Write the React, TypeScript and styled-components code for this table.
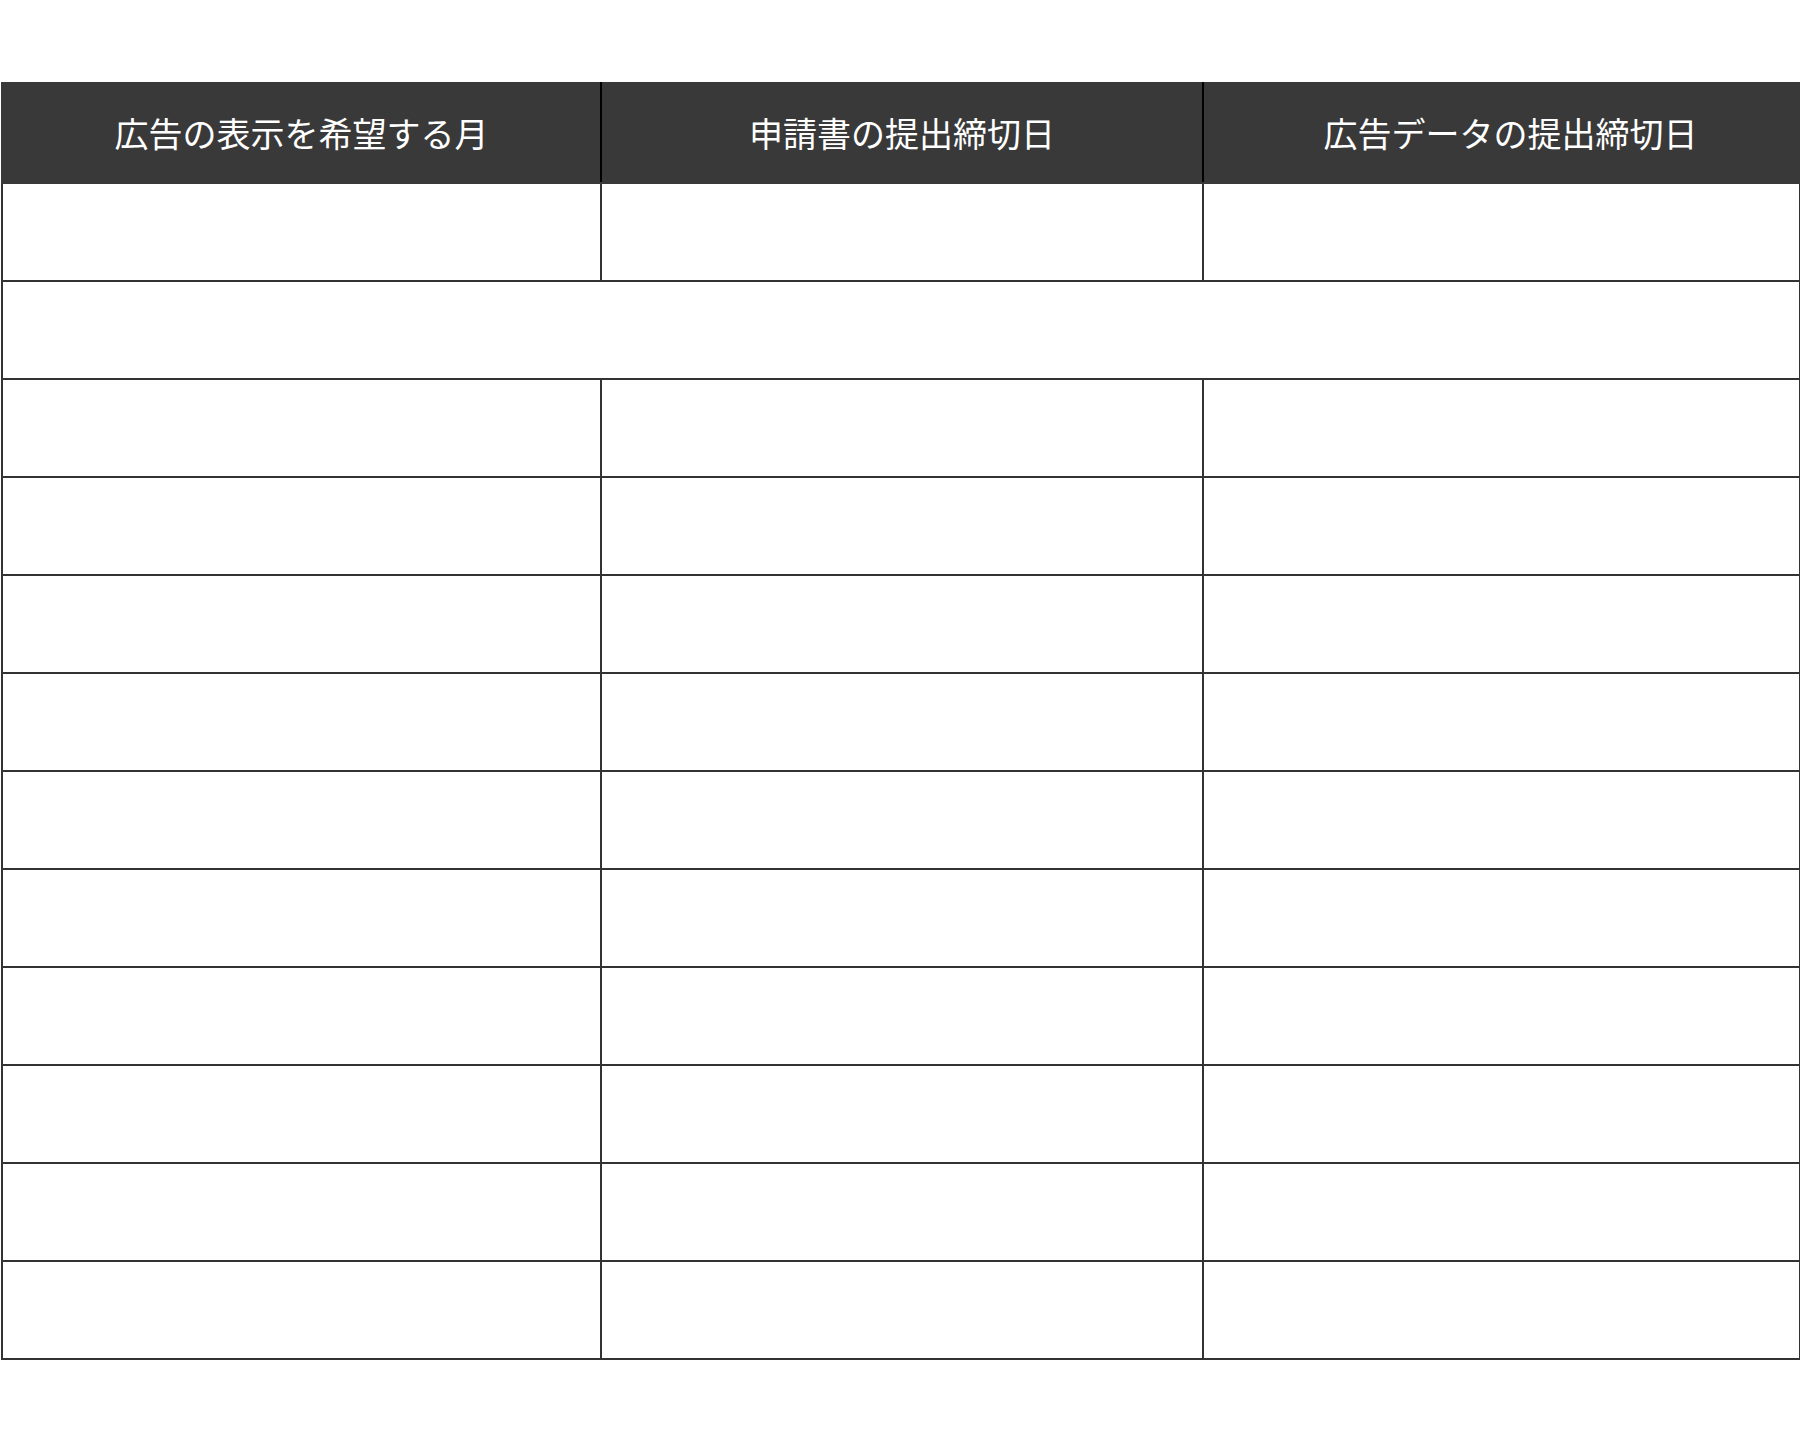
import React from "react";
import styled, { createGlobalStyle } from "styled-components";

const GlobalStyle = createGlobalStyle`
  html, body {
    margin: 0;
    padding: 0;
    background: #ffffff;
  }
  body {
    font-family: "Noto Sans CJK JP", "Noto Sans", sans-serif;
  }
`;

const Page = styled.div`
  padding: 82px 1px 0 1px;
  width: 1798px;
`;

const Table = styled.table`
  width: 1798px;
  border-collapse: collapse;
  table-layout: fixed;
`;

const HeadCell = styled.th<{ $indent?: number }>`
  height: 98px;
  padding: 0 0 0 ${(p) => p.$indent ?? 0}px;
  background: #393939;
  color: #ffffff;
  font-family: "Noto Sans CJK JP", "Noto Sans", sans-serif;
  font-weight: 400;
  font-size: 34px;
  line-height: 1;
  text-align: center;
  vertical-align: middle;
  border: 2px solid #393939;
  border-left-color: #000000;
  border-right-color: #000000;
  &:first-child {
    border-left-color: #393939;
  }
  &:last-child {
    border-right-color: #393939;
  }
`;

const Cell = styled.td`
  height: 96px;
  padding: 0;
  border: 2px solid #333333;
  background: #ffffff;
`;

const columns = [
  { label: "広告の表示を希望する月", indent: 0 },
  { label: "申請書の提出締切日", indent: 0 },
  { label: "広告データの提出締切日", indent: 18 },
];

export default function App() {
  const rows = Array.from({ length: 12 }, (_, i) => i);
  return (
    <Page>
      <GlobalStyle />
      <Table>
        <colgroup>
          <col style={{ width: "599px" }} />
          <col style={{ width: "602px" }} />
          <col style={{ width: "597px" }} />
        </colgroup>
        <thead>
          <tr>
            {columns.map((c) => (
              <HeadCell key={c.label} $indent={c.indent}>
                {c.label}
              </HeadCell>
            ))}
          </tr>
        </thead>
        <tbody>
          {rows.map((r) =>
            r === 1 ? (
              <tr key={r}>
                <Cell colSpan={3} />
              </tr>
            ) : (
              <tr key={r}>
                <Cell />
                <Cell />
                <Cell />
              </tr>
            )
          )}
        </tbody>
      </Table>
    </Page>
  );
}
